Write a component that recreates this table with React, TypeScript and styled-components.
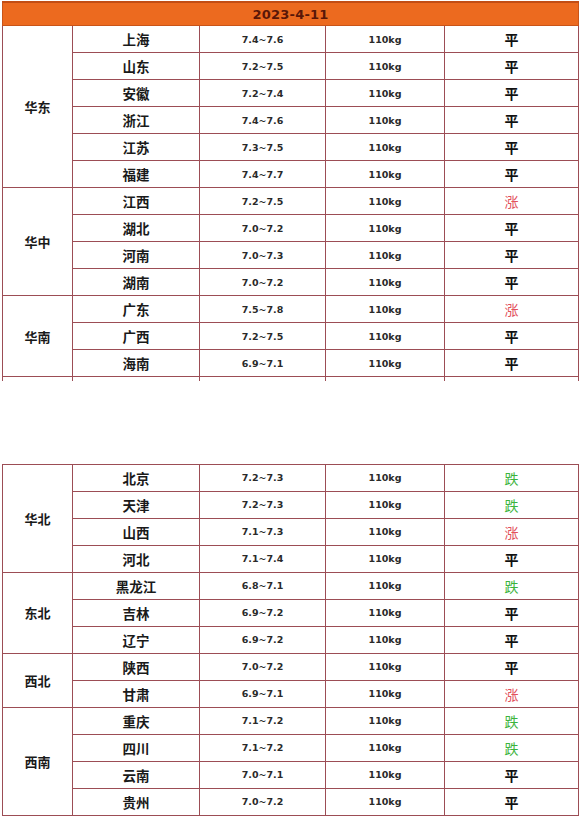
import React from "react"
import styled, { createGlobalStyle } from "styled-components"

const GlobalStyle = createGlobalStyle`
  html, body {
    margin: 0;
    padding: 0;
    background: #ffffff;
  }
  body {
    font-family: "Noto Sans CJK SC", "DejaVu Sans", sans-serif;
  }
`

type Trend = "平" | "涨" | "跌"

interface Row {
  city: string
  price: string
  trend: Trend
}

interface Group {
  region: string
  rows: Row[]
}

const firstPart: Group[] = [
  {
    region: "华东",
    rows: [
      { city: "上海", price: "7.4~7.6", trend: "平" },
      { city: "山东", price: "7.2~7.5", trend: "平" },
      { city: "安徽", price: "7.2~7.4", trend: "平" },
      { city: "浙江", price: "7.4~7.6", trend: "平" },
      { city: "江苏", price: "7.3~7.5", trend: "平" },
      { city: "福建", price: "7.4~7.7", trend: "平" },
    ],
  },
  {
    region: "华中",
    rows: [
      { city: "江西", price: "7.2~7.5", trend: "涨" },
      { city: "湖北", price: "7.0~7.2", trend: "平" },
      { city: "河南", price: "7.0~7.3", trend: "平" },
      { city: "湖南", price: "7.0~7.2", trend: "平" },
    ],
  },
  {
    region: "华南",
    rows: [
      { city: "广东", price: "7.5~7.8", trend: "涨" },
      { city: "广西", price: "7.2~7.5", trend: "平" },
      { city: "海南", price: "6.9~7.1", trend: "平" },
    ],
  },
]

const secondPart: Group[] = [
  {
    region: "华北",
    rows: [
      { city: "北京", price: "7.2~7.3", trend: "跌" },
      { city: "天津", price: "7.2~7.3", trend: "跌" },
      { city: "山西", price: "7.1~7.3", trend: "涨" },
      { city: "河北", price: "7.1~7.4", trend: "平" },
    ],
  },
  {
    region: "东北",
    rows: [
      { city: "黑龙江", price: "6.8~7.1", trend: "跌" },
      { city: "吉林", price: "6.9~7.2", trend: "平" },
      { city: "辽宁", price: "6.9~7.2", trend: "平" },
    ],
  },
  {
    region: "西北",
    rows: [
      { city: "陕西", price: "7.0~7.2", trend: "平" },
      { city: "甘肃", price: "6.9~7.1", trend: "涨" },
    ],
  },
  {
    region: "西南",
    rows: [
      { city: "重庆", price: "7.1~7.2", trend: "跌" },
      { city: "四川", price: "7.1~7.2", trend: "跌" },
      { city: "云南", price: "7.0~7.1", trend: "平" },
      { city: "贵州", price: "7.0~7.2", trend: "平" },
    ],
  },
]

const LINE = "#9c4d55"

const Page = styled.div`
  padding: 1px 4px 0 2px;
  width: 576px;
`

const Gap = styled.div`
  height: 83px;
`

const PriceTable = styled.table`
  width: 576px;
  table-layout: fixed;
  border-collapse: collapse;
  border-spacing: 0;
  td {
    border: 1px solid ${LINE};
    padding: 0;
    text-align: center;
    vertical-align: middle;
    color: #1a1a1a;
  }
`

const HeaderCell = styled.td`
  && {
    height: 22px;
    background: #ec6a1f;
    border: 1px solid #c95418;
    border-top: 2px solid #c24d14;
    color: #5a1708;
    font-family: "DejaVu Sans", sans-serif;
    font-weight: 700;
    font-size: 13px;
    letter-spacing: 0.2px;
  }
`

const DataRow = styled.tr`
  height: 27px;
`

const RegionCell = styled.td`
  font-size: 13px;
  font-weight: 700;
`

const CityCell = styled.td`
  font-size: 13.5px;
  font-weight: 700;
`

const NumberCell = styled.td`
  && {
    font-family: "DejaVu Sans", sans-serif;
    font-size: 9.5px;
    font-weight: 700;
    color: #2a2a2a;
  }
`

const TrendCell = styled.td<{ $trend: Trend }>`
  && {
    font-size: 14px;
    font-weight: ${({ $trend }) => ($trend === "平" ? 700 : 400)};
    color: ${({ $trend }) =>
      $trend === "涨" ? "#e2515c" : $trend === "跌" ? "#3cb43c" : "#111111"};
  }
`

const StubRow = styled.tr`
  height: 4px;
  td {
    border-bottom: none;
    border-top: none;
  }
`

const Cols = () => (
  <colgroup>
    <col style={{ width: 70 }} />
    <col style={{ width: 127 }} />
    <col style={{ width: 126 }} />
    <col style={{ width: 119 }} />
    <col style={{ width: 134 }} />
  </colgroup>
)

function GroupRows({ group }: { group: Group }) {
  return (
    <>
      {group.rows.map((row, i) => (
        <DataRow key={row.city}>
          {i === 0 && <RegionCell rowSpan={group.rows.length}>{group.region}</RegionCell>}
          <CityCell>{row.city}</CityCell>
          <NumberCell>{row.price}</NumberCell>
          <NumberCell>110kg</NumberCell>
          <TrendCell $trend={row.trend}>{row.trend}</TrendCell>
        </DataRow>
      ))}
    </>
  )
}

export default function App() {
  return (
    <>
      <GlobalStyle />
      <Page>
        <PriceTable>
          <Cols />
          <tbody>
            <tr>
              <HeaderCell colSpan={5}>2023-4-11</HeaderCell>
            </tr>
            {firstPart.map(g => (
              <GroupRows key={g.region} group={g} />
            ))}
            <StubRow>
              <td></td><td></td><td></td><td></td><td></td>
            </StubRow>
          </tbody>
        </PriceTable>
        <Gap />
        <PriceTable>
          <Cols />
          <tbody>
            {secondPart.map(g => (
              <GroupRows key={g.region} group={g} />
            ))}
          </tbody>
        </PriceTable>
      </Page>
    </>
  )
}
